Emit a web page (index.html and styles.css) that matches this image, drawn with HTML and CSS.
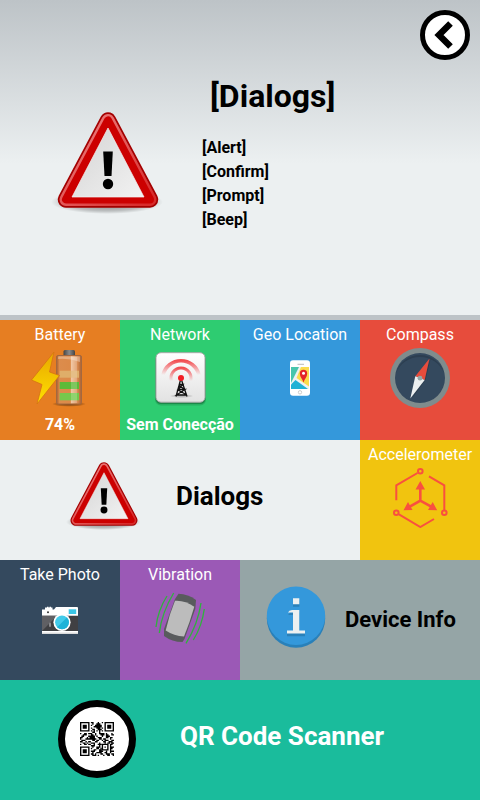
FILE: index.html
```html
<!DOCTYPE html>
<html lang="en">
<head>
<meta charset="utf-8">
<meta name="viewport" content="width=device-width, initial-scale=1">
<title>Dialogs</title>
<link rel="stylesheet" href="styles.css">
</head>
<body>
<svg class="defs" aria-hidden="true">
  <defs>
    <linearGradient id="plate" x1="0" y1="0" x2="1" y2="1"><stop offset="0" stop-color="#d4d4d4"/><stop offset="1" stop-color="#f2f2f2"/></linearGradient>
    <linearGradient id="rim" x1="0" y1="0" x2="1" y2="1"><stop offset="0" stop-color="#ee8585"/><stop offset="1" stop-color="#d72b2b"/></linearGradient>
    <radialGradient id="shade"><stop offset="0" stop-color="#000" stop-opacity=".5"/><stop offset=".75" stop-color="#000" stop-opacity=".2"/><stop offset="1" stop-color="#000" stop-opacity="0"/></radialGradient>
    <linearGradient id="bolt" x1="0" y1="0" x2="0" y2="1"><stop offset="0" stop-color="#e8a800"/><stop offset="1" stop-color="#ffe000"/></linearGradient>
    <linearGradient id="glass"><stop offset="0" stop-color="#a85f30"/><stop offset=".12" stop-color="#dc8c4c"/><stop offset=".55" stop-color="#dc8a48"/><stop offset=".6" stop-color="#edb88c"/><stop offset=".85" stop-color="#d8894f"/><stop offset="1" stop-color="#a85f30"/></linearGradient>
    <linearGradient id="cap"><stop offset="0" stop-color="#444"/><stop offset=".5" stop-color="#8a8a8a"/><stop offset="1" stop-color="#444"/></linearGradient>
    <linearGradient id="key" x1="0" y1="0" x2="0" y2="1"><stop offset="0" stop-color="#fff"/><stop offset="1" stop-color="#e2e2e2"/></linearGradient>
    <linearGradient id="wave" x1="0" y1="0" x2="0" y2="1"><stop offset="0" stop-color="#f03035"/><stop offset="1" stop-color="#f03035" stop-opacity="0"/></linearGradient>
  </defs>
  <symbol id="warning" viewBox="0 0 120 120">
    <ellipse cx="59" cy="102" rx="56" ry="12" fill="url(#shade)"/>
    <path d="M60 20.500L18 99.500H102Z" fill="#a40000" stroke="#a40000" stroke-width="16.500" stroke-linejoin="round"/>
    <path d="M60 20.500L18 99.500H102Z" fill="none" stroke="url(#rim)" stroke-width="13" stroke-linejoin="round"/>
    <path d="M60 20.500L18 99.500H102Z" fill="#c00" stroke="#c00" stroke-width="8" stroke-linejoin="round"/>
    <path d="M60 28L24 97H96Z" fill="url(#plate)" stroke="#f4f4f4" stroke-width=".7"/>
    <path d="M55.200 51.500H64.800L63.500 76H56.500Z"/>
    <circle cx="60" cy="84" r="5.200"/>
  </symbol>
</svg>

<main class="app">
  <section class="hero">
    <button class="back" type="button" aria-label="Back">
      <svg viewBox="0 0 50 50"><circle cx="25" cy="25" r="22.500" fill="#fff" stroke="#000" stroke-width="5"/><path d="M30.500 13.500L19 25L30.500 36.500" fill="none" stroke="#000" stroke-width="6.500"/></svg>
    </button>
    <div class="hero-body">
      <svg class="hero-icon" aria-hidden="true"><use href="#warning"/></svg>
      <div class="hero-text">
        <h1>[Dialogs]</h1>
        <ul class="actions">
          <li><button type="button">[Alert]</button></li>
          <li><button type="button">[Confirm]</button></li>
          <li><button type="button">[Prompt]</button></li>
          <li><button type="button">[Beep]</button></li>
        </ul>
      </div>
    </div>
  </section>

  <nav class="tiles">
    <button class="tile battery" type="button">
      <span>Battery</span>
      <svg class="icon" viewBox="0 0 60 60">
        <ellipse cx="39" cy="56" rx="17" ry="2.800" fill="url(#shade)"/>
        <rect x="33.500" y="2" width="11.500" height="7" rx="1.500" fill="url(#cap)"/>
        <rect x="26.500" y="7.500" width="25" height="48.500" rx="1.500" fill="url(#glass)" stroke="#a3683f"/>
        <path d="M28 8.500H50V14Q39 10 28 11Z" fill="#fff" opacity=".3"/>
        <path d="M29.700 22.700H49v7H29.700Z" fill="#dfae69"/>
        <path d="M29.700 34H49v7H29.700Z" fill="#5dba38"/>
        <path d="M29.700 45H49v7.300H29.700Z" fill="#75c84c"/>
        <path d="M41 9h6v46h-6Z" fill="#fff" opacity=".2"/>
        <path d="M24 4L1.500 32L12 36.500L7 56L29.500 27.500L19.500 24Z" fill="url(#bolt)" stroke="#d57410" stroke-width=".8"/>
      </svg>
      <strong>74%</strong>
    </button>

    <button class="tile network" type="button">
      <span>Network</span>
      <svg class="icon" viewBox="0 0 60 60">
        <rect x="5" y="6.500" width="51" height="51" rx="6" fill="#145c32" opacity=".25"/>
        <rect x="5.500" y="5.500" width="50" height="50.500" rx="5.500" fill="#126030" opacity=".5"/>
        <rect x="6" y="4.700" width="49" height="49.500" rx="5" fill="url(#key)" stroke="#a9a9a9"/>
        <path d="M13 27A18.500 18.500 0 0 1 49 27" fill="none" stroke="url(#wave)" stroke-width="3.600" opacity=".85"/>
        <path d="M21.500 33A10 10 0 1 1 40.500 33" fill="none" stroke="url(#wave)" stroke-width="3" opacity=".85"/>
        <ellipse cx="31.500" cy="48" rx="12" ry="2" fill="url(#shade)" opacity=".5"/>
        <path d="M30.500 32L26 48.500M31.500 32L37 48.500M29.300 36.500H33L28 41.500H35L26.500 47H37M28.700 37L34.500 41.500M28 42L36 46.500" fill="none" stroke="#111" stroke-width="1.300"/>
        <circle cx="31" cy="30" r="3" fill="#f21d24"/>
      </svg>
      <strong>Sem Conecção</strong>
    </button>

    <button class="tile geo" type="button">
      <span>Geo Location</span>
      <svg class="icon" viewBox="0 0 60 60">
        <rect x="20" y="12.300" width="20" height="35.500" rx="3" fill="#fff"/>
        <path d="M21 19H39V41H21Z" fill="#f1f1f1"/>
        <path d="M21 19H29L21 35Z" fill="#48c5ad"/>
        <path d="M31 19H39V38.500L26.500 30Z" fill="#fbdc4d"/>
        <path d="M25.500 32L38 41H21V36.500Z" fill="#20b1d5"/>
        <path d="M33.500 34.500C32.500 31 29.800 29 29.800 25.500A3.700 3.700 0 0 1 37.200 25.500C37.200 29 34.500 31 33.500 34.500Z" fill="#e42528"/>
        <circle cx="33.500" cy="25.300" r="1.500" fill="#fff"/>
        <path d="M27.500 16.300H34" stroke="#bbb"/>
        <circle cx="30" cy="44.300" r="1.700" fill="#fff" stroke="#c6c6c6" stroke-width=".9"/>
      </svg>
    </button>

    <button class="tile compass" type="button">
      <span>Compass</span>
      <svg class="icon" viewBox="0 0 60 60">
        <circle cx="30" cy="30" r="30" fill="#7f8c8d"/>
        <circle cx="30" cy="30" r="25" fill="#34495e"/>
        <path d="M6 25A25 25 0 0 1 54 25A26 26 0 0 0 6 25" fill="#2c3e50"/>
        <path d="M40.500 11.500L35.500 32L22 50.500L31 33Z" fill="#2b3d4f"/>
        <path d="M39.500 10.500L25.300 28.300L34.700 32Z" fill="#e74c3c"/>
        <path d="M20.300 50.500L25.300 28.300L34.700 32Z" fill="#ecf0f1"/>
        <circle cx="30" cy="30.200" r="2.400" fill="#95a5a6"/>
      </svg>
    </button>

    <button class="tile wide dialogs" type="button">
      <svg class="warning-icon" aria-hidden="true"><use href="#warning"/></svg>
      <b>Dialogs</b>
    </button>

    <button class="tile accelerometer" type="button">
      <span>Accelerometer</span>
      <svg class="icon" viewBox="0 0 60 60">
        <g fill="none" stroke="#f9503f" stroke-width="2">
          <path d="M27.500 5L6.300 17.300V32.300M39 8.300L54.300 17.300V42M9 46.300L30.300 59L44 51"/>
          <circle cx="30.300" cy="3.300" r="2.300"/><circle cx="54.300" cy="44.700" r="2.300"/><circle cx="6.300" cy="44.700" r="2.300"/>
          <path d="M30.300 18V32.700L18 39.700M30.300 32.700L43 39.700" stroke-width="2.600"/>
        </g>
        <path d="M30.300 13L35 21.500H25.500ZM13.500 42.300L18 34L22.500 42ZM47.200 42.300L42.700 34L38 42Z" fill="#f9503f"/>
      </svg>
    </button>

    <button class="tile photo" type="button">
      <span>Take Photo</span>
      <svg class="icon" viewBox="0 0 60 60">
        <path d="M15 19.500h2v-.8h1.500v.8h1v-.8H21v.8h1.500V22H15Z" fill="#fff"/>
        <path d="M12 21.500H24L26 19H47Q48 19 48 20V45.700H12Z" fill="#fff"/>
        <path d="M12 27.700H48V43H12Z" fill="#404043"/>
        <path d="M12 27.700H27L12 43Z" fill="#606064"/>
        <path d="M12 44.500H48V45.700H12Z" fill="#dcdcdc"/>
        <rect x="38.700" y="21.300" width="7.500" height="4.700" fill="#3bc6e6"/>
        <circle cx="18" cy="24.300" r="1" fill="#333"/>
        <rect x="19" y="34.500" width="2" height="4.500" rx="1" fill="#8a8a8e"/>
        <circle cx="32" cy="34.300" r="8.600" fill="#fff"/>
        <circle cx="32" cy="34.300" r="6.900" fill="#42cbea"/>
        <path d="M36.900 29.400A6.900 6.900 0 0 1 27.100 39.200Z" fill="#1db3d8"/>
      </svg>
    </button>

    <button class="tile vibration" type="button">
      <span>Vibration</span>
      <svg class="icon" viewBox="0 0 60 60">
        <path d="M25 11L28.500 5.800Q38 6 46 12L45.300 21L34.500 51L32.500 54Q22 54 14 48V41Z" fill="#595b5d"/>
        <path d="M25 12.700Q35 12 44.300 18.700Q40 34 34 48.500Q24 48 15.700 42.500Q19 27 25 12.700Z" fill="#bcbcbc"/>
        <path d="M17 8Q8 22 6 39M23.700 5Q12 24 9.300 45M51 15Q48 36 36 55.300M54.300 21Q52 38 43.300 52" fill="none" stroke="#2db53b" stroke-width="1.300"/>
      </svg>
    </button>

    <button class="tile wide info" type="button">
      <svg class="info-icon" viewBox="0 0 60 62">
        <circle cx="30" cy="32.500" r="29.200" fill="#2980b9"/>
        <circle cx="30" cy="29.700" r="29.200" fill="#3498db"/>
        <path d="M27 14.500h6.300v6.300H27ZM22 29L24.500 26.500H33.300V46.500H39V50.300H21V46.500H27V29Z" fill="#2980b9"/>
        <path d="M27 12.300h6.300V18.200H27ZM22 26.500Q23 24 26 24H33.300V44.500H39V47.500H21V44.500H27V26.500Z" fill="#ecf0f1"/>
      </svg>
      <b>Device Info</b>
    </button>

    <button class="tile full qr" type="button">
      <svg class="qr-icon" viewBox="0 0 78 78">
        <circle cx="39" cy="39" r="35.500" fill="#fff" stroke="#000" stroke-width="7"/>
        <svg x="22" y="22" width="34" height="34" viewBox="0 0 25 25">
          <path fill="none" stroke="#000" d="M.5 .5h6v6h-6ZM18.500 .5h6v6h-6ZM.5 18.500h6v6h-6ZM16.500 16.500h4v4h-4Z"/>
          <path d="M2 2h3v3H2ZM20 2h3v3h-3ZM2 20h3v3H2ZM18 18h1v1h-1Z"/>
          <path stroke="#000" d="M8 .5h2m3 0h1m2 0h1M9 1.500h1m2 0h3M8 2.500h1m2 0h5M10 3.500h6M8 4.500h1m3 0h3m1 0h1M9 5.500h2m2 0h3M8 6.500h1m1 0h1m1 0h1m1 0h1m1 0h1M9 7.500h2m3 0h1M0 8.500h1m2 0h2m1 0h3m2 0h1m2 0h4m1 0h1m3 0h1M2 9.500h3m3 0h2m1 0h1m3 0h3m1 0h2m2 0h2M1 10.500h2m3 0h5m1 0h1m3 0h1m2 0h3M0 11.500h2m3 0h1m1 0h4m2 0h3m3 0h2m1 0h2M0 12.500h1m3 0h8m2 0h2m1 0h2m3 0h1M1 13.500h3m5 0h2m1 0h2m2 0h1m1 0h3m2 0h2M0 14.500h2m2 0h1m1 0h2m3 0h2m4 0h2m2 0h3M2 15.500h2m1 0h1m2 0h3m3 0h1m3 0h1m1 0h2m1 0h2M0 16.500h1m2 0h2m1 0h2m2 0h1m2 0h3m6 0h2M8 17.500h3m3 0h1m7 0h1M9 18.500h1m2 0h3m7 0h3M8 19.500h1m3 0h2m1 0h1m6 0h2M10 20.500h2m2 0h2m6 0h1M8 21.500h3m3 0h3m2 0h1m2 0h3M9 22.500h1m2 0h4m2 0h2m2 0h1M8 23.500h2m1 0h1m3 0h2m2 0h3m1 0h2M9 24.500h3m1 0h1m3 0h1m2 0h2m2 0h1"/>
        </svg>
      </svg>
      <b>QR Code Scanner</b>
    </button>
  </nav>
</main>
</body>
</html>
```
FILE: styles.css
```css
* {
  box-sizing: border-box;
}

body {
  margin: 0;
  background: #ecf0f1;
  color: #000;
  font: 16px/24px Roboto, "Liberation Sans", sans-serif;
}

button {
  margin: 0;
  padding: 0;
  border: 0;
  background: none;
  color: inherit;
  font: inherit;
  cursor: pointer;
}

svg {
  display: block;
  flex: none;
}

.defs {
  position: absolute;
  width: 0;
  height: 0;
}

.hero {
  padding: 10px 10px 83px;
  border-bottom: 5px solid #bdc3c7;
  background: linear-gradient(#bdc3c7, #ecf0f1 52%);
}

.back {
  display: block;
  width: 50px;
  height: 50px;
  margin-left: auto;
  border-radius: 50%;
}

.hero-body {
  display: flex;
  gap: 34px;
  padding: 16px 0 0 38px;
}

.hero-icon {
  width: 120px;
  height: 120px;
  margin-top: 24px;
}

h1 {
  margin: 0 0 20px;
  padding-left: 8px;
  font-size: 32px;
  font-weight: 700;
  line-height: 40px;
}

.actions {
  margin: 0;
  padding: 0;
  list-style: none;
  font-weight: 700;
}

.actions button {
  display: block;
}

.tiles {
  display: grid;
  grid-template-columns: repeat(4, 1fr);
  grid-auto-rows: minmax(120px, auto);
}

.tile {
  display: flex;
  flex-direction: column;
  align-items: center;
  padding: 3px 0;
  color: #fff;
  white-space: nowrap;
}

.icon {
  width: 60px;
  height: 60px;
  margin: 1px 0 5px;
}

.tile b {
  font-size: 26px;
  font-weight: 700;
  line-height: 32px;
}

.wide,
.full {
  flex-direction: row;
  padding: 0;
}

.battery { background: #e67e22; }
.network { background: #2ecc71; }
.geo { background: #3498db; }
.compass { background: #e74c3c; }
.accelerometer { background: #f1c40f; }
.photo { background: #34495e; }
.vibration { background: #9b59b6; }

.dialogs {
  grid-column: span 3;
  gap: 32px;
  padding: 0 0 8px 64px;
  background: #ecf0f1;
  color: #000;
}

.warning-icon {
  width: 80px;
  height: 80px;
  margin-bottom: 4px;
}

.info {
  grid-column: span 2;
  gap: 19px;
  padding-left: 26px;
  background: #95a5a6;
  color: #000;
}

.info b {
  font-size: 22px;
}

.info-icon {
  width: 60px;
  height: 62px;
  margin-bottom: 6px;
}

.full {
  grid-column: 1 / -1;
}

.qr {
  gap: 44px;
  padding: 0 0 2px 58px;
  background: #1abc9c;
}

.qr b {
  margin-bottom: 6px;
}

.qr-icon {
  width: 78px;
  height: 78px;
}
```
